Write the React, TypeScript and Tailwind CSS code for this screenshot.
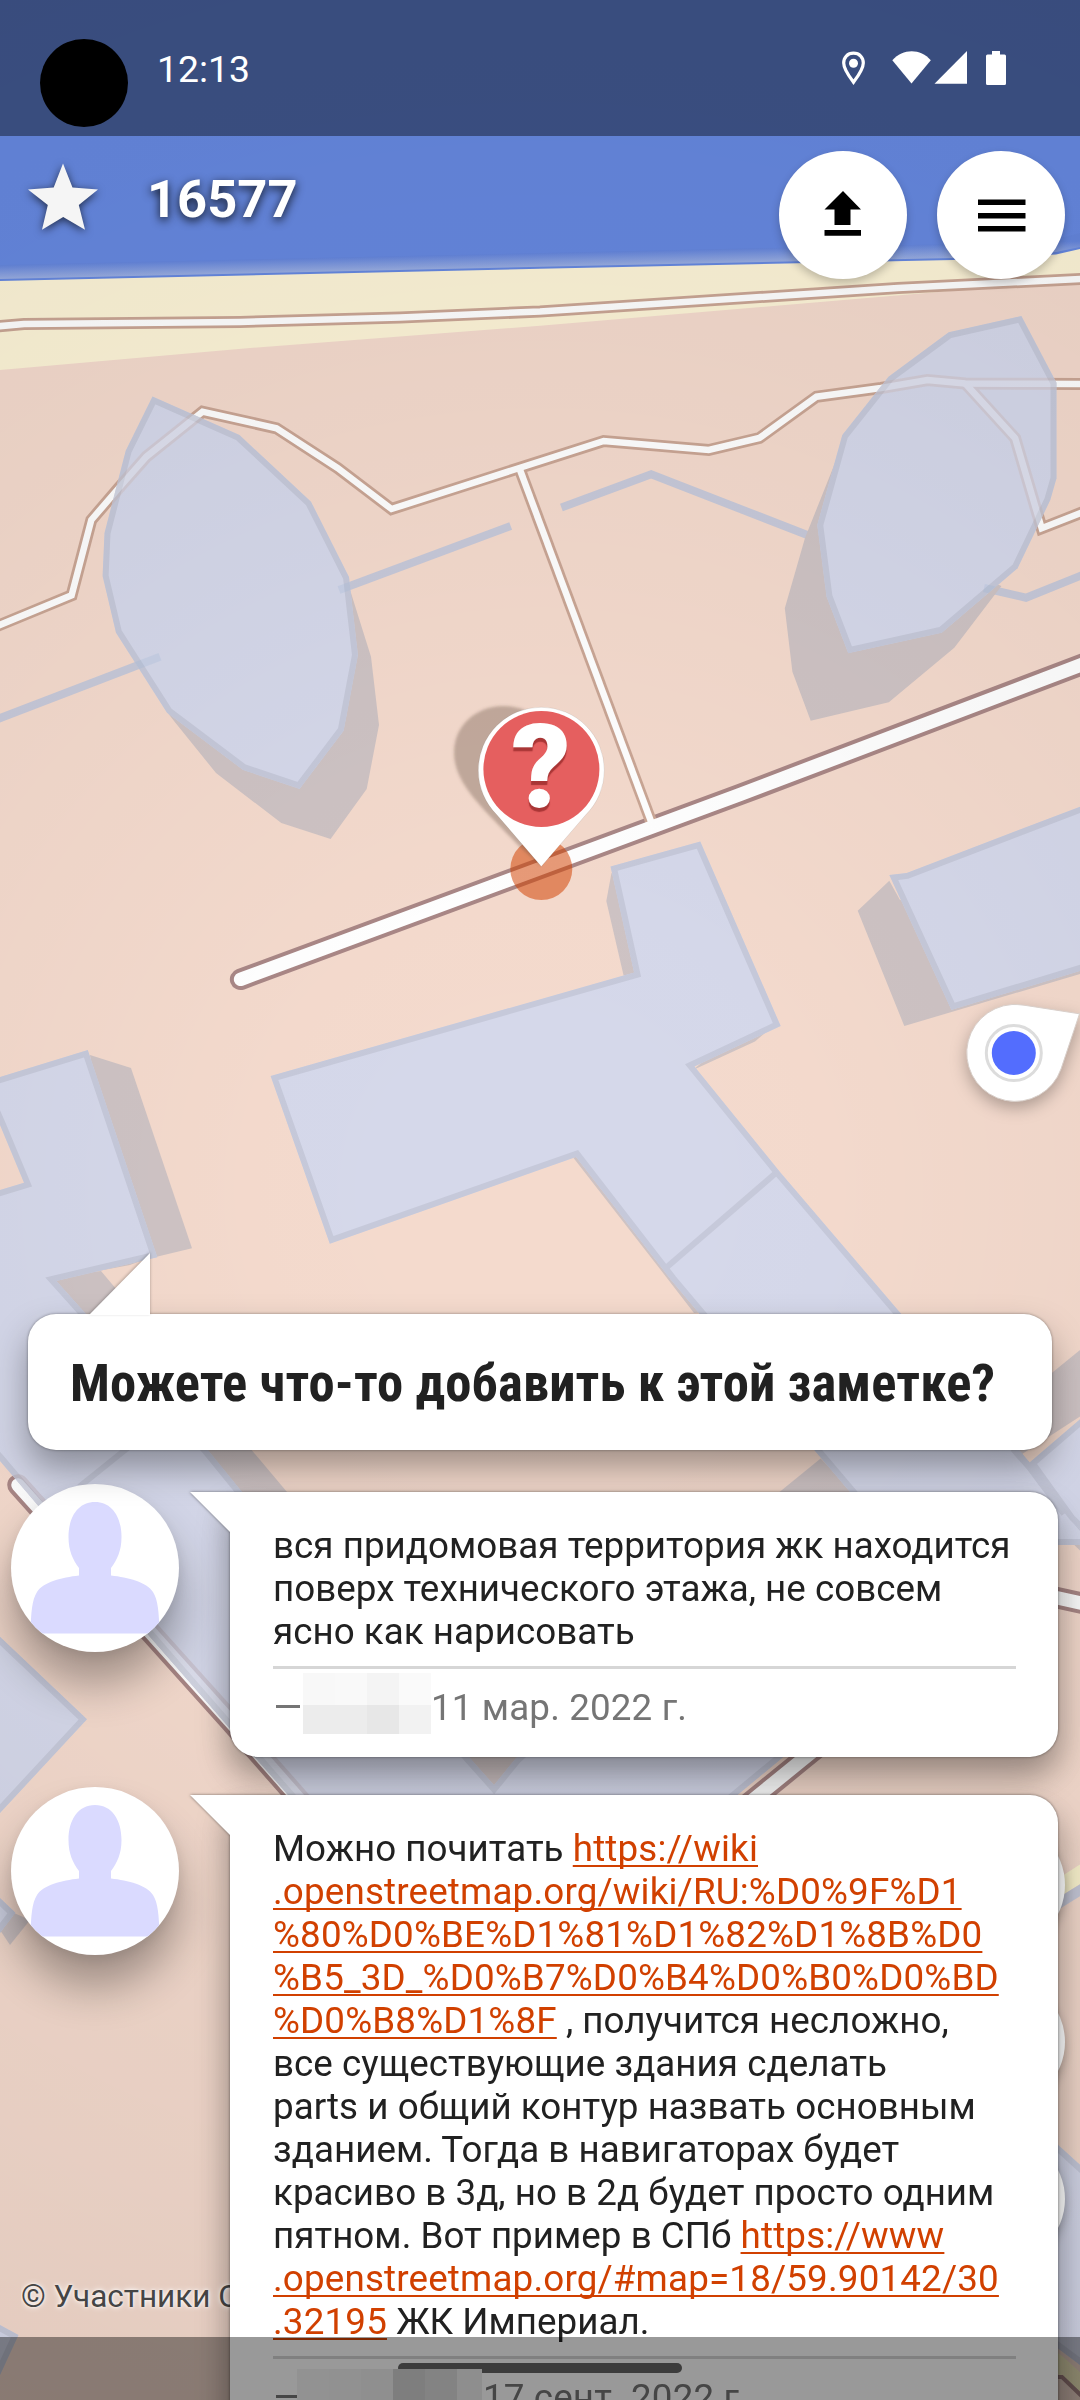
import React from 'react';

type Pt = string;

const FOOTPATHS: Pt[] = [
  '-10,629 71.6,595.3 91.3,520 118.8,488 146.4,456.7 202.5,411.7 276.5,428.3 337.5,468 391.5,509 519.3,468 603.7,441 708.7,450 759.4,438 816.5,396.7 881,388 927.4,380 965.3,383.5 1090,384',
  '965.3,383.5 1015.2,438.3 1041.7,528.3 1090,509.3',
  '519.3,468 652,824',
  '-10,327 24,324 240,322 400,317.5 540,311.5 898,288 1090,278.5',
];

const ROADS: Pt[] = [
  '240.6,979.3 740,794.5 1090,661.5',
  '18,1485 230,1721 340,1846',
  '860,1713 802,1760 700,1843',
  '1040,1594 1090,1605',
];

const CHANNELS: Pt[] = [
  '-10,722 160,656.7',
  '339,590 510.7,526',
  '561.4,507.5 651.2,474.3 815,538',
  '984,588 1026,597.7 1090,572',
];

const WALLS: Pt[] = [
  '340,570 351,593 371,656.7 379,725 366.7,789 330.6,839 281.3,823 216,773 175.6,723 167,712 240,700',
  '835.5,461.7 805,538 784.8,608.3 792.4,671.7 810.7,720.7 888.8,702.3 954.3,647.7 1001.4,586 940,560 860,480',
  '611.5,873 606.3,901 623.6,975.4 640,974 660,900',
  '889.3,880.7 857.7,910.7 904.3,1026 1090,971 1090,940 900,900',
  '90,1055 131,1068 192,1248.3 151.5,1258 110,1200',
  '47,1277 101,1271 287,1492 330,1545 280,1545 237,1492',
  '45,1281 130,1265 151,1257 60,1270',
  '693,1070 755,1041.4 765,1033 740,1030',
  '572,1156 660,1269 694,1313 710,1312 600,1160',
  '455,1740 530,1740 494,1792',
  '1090,1342 1053,1372 960,1450 1013,1460 1090,1410',
  '760,1508 820.6,1458.6 870,1508',
  '1050,1520 1062,1526 1066,1537 1090,1560 1090,1540 1064,1500',
  '0,1930 14,1913 30,1920 10,1945',
];

const BUILDINGS: Pt[] = [
  '152.5,396.5 239.5,435 311,501.7 349,577 358,655 343.7,730.7 299.6,789 243,770 167,712.7 116,632.7 102.6,576 104.5,533 125.7,450.7',
  '1021.4,316 1056.5,382.7 1056.5,478.3 1050.3,500 1017.6,568.3 941.9,632.7 848.2,653.3 826.5,596.7 817.2,525 842.3,435 888.5,376.7 948.7,332.3',
  '610.5,866.4 700.3,841.5 780.7,1026 694.5,1066.5 780,1172 900,1312.5 1020,1451 1070,1510 1100,1545 895,1545 815,1451 671,1280 576,1157 329.8,1243.7 270.6,1076 634,972.5',
  '889.3,875 906.7,872.9 1100,799 1100,965 951.4,1010',
  '-20,1083 87.8,1050 157.4,1257.3 56.5,1281 208,1450 240.5,1490 470,1758 494,1785 516,1758 800,1500 1000,1560 781,1759 700,1826 560,1900 380,1900 288,1795 232,1731 150,1637 0,1461 -20,1437 -20,1196 24,1182.7 0,1125 -20,1080',
  '1100,1402 1029,1463 1070,1520 1100,1548',
  '-20,1616 0,1636.7 87,1719.3 0,1813 -20,1833',
  '-20,1882 0,1898 15.5,1912.7 0,1933 -20,1950',
  '-20,2317 0,2325 18.5,2335 0,2375 -20,2410',
  '1040,2130 1056,2143 1100,2183 1100,2380 1040,2335',
];

function RoadLayer() {
  return (
    <g fill="none" strokeLinejoin="round" strokeLinecap="round">
      {ROADS.map((p) => (
        <polyline key={p} points={p} stroke="#a98786" strokeWidth="21.5" />
      ))}
      {FOOTPATHS.map((p) => (
        <polyline key={p} points={p} stroke="#caa695" strokeWidth="12" strokeLinejoin="miter" strokeLinecap="butt" />
      ))}
      {FOOTPATHS.map((p) => (
        <polyline key={p} points={p} stroke="#fff" strokeWidth="6.5" strokeLinejoin="miter" strokeLinecap="butt" />
      ))}
      {ROADS.map((p) => (
        <polyline key={p} points={p} stroke="#fff" strokeWidth="13.5" />
      ))}
    </g>
  );
}

function ChannelLayer() {
  return (
    <g fill="none" stroke="#c7c9d9" strokeWidth="8">
      {CHANNELS.map((p) => (
        <polyline key={p} points={p} />
      ))}
    </g>
  );
}

function CityMap() {
  return (
    <svg className="absolute inset-0" width="1080" height="2400" viewBox="0 0 1080 2400">
      <defs>
        <radialGradient id="vignette" gradientUnits="userSpaceOnUse" cx="540" cy="1190" r="1300">
          <stop offset="0" stopColor="#000" stopOpacity="0" />
          <stop offset="0.2" stopColor="#000" stopOpacity="0.003" />
          <stop offset="0.68" stopColor="#000" stopOpacity="0.046" />
          <stop offset="1" stopColor="#000" stopOpacity="0.066" />
        </radialGradient>
        <linearGradient id="shore" gradientUnits="userSpaceOnUse" x1="0" y1="265" x2="0.31" y2="279">
          <stop offset="0" stopColor="#6485dc" />
          <stop offset="1" stopColor="#9aaee2" />
        </linearGradient>
        {BUILDINGS.map((p, i) => (
          <clipPath key={p} id={'roof' + i}>
            <polygon points={p} />
          </clipPath>
        ))}
        <clipPath id="roofs">
          {[0, 1, 4].map((i) => (
            <polygon key={i} points={BUILDINGS[i]} />
          ))}
        </clipPath>
        <filter id="soft" x="-20%" y="-20%" width="140%" height="140%">
          <feGaussianBlur stdDeviation="1.6" />
        </filter>
      </defs>

      <rect width="1080" height="2400" fill="#f4dacd" />
      <polygon points="0,200 1080,200 1080,280 867,298 540,325.7 250,348 0,370" fill="#fdf4d7" />
      <polygon points="0,0 1080,0 1080,249 1056,254.5 953,260 540,268.7 0,281" fill="#6688e0" />
      <polygon points="0,265 540,253 953,244 1056,239 1080,233 1080,247 1056,252 953,258 540,266.7 0,279" fill="url(#shore)" />

      <polygon points="1090,1858 1090,1878 1040,1909 1040,1890" fill="#fdf6d0" />
      <polygon points="1090,1878 1090,1890 1040,1921 1040,1909" fill="#c7c9d9" />
      <polyline points="1040,2350 1058,2363 1090,2392" stroke="#f5edc0" strokeWidth="16" fill="none" />
      <polyline points="1050,2377 1062,2377 1090,2404" stroke="#a78584" strokeWidth="4" fill="none" />

      <ChannelLayer />
      <RoadLayer />

      <g fill="#cec3c4">
        {WALLS.map((p) => (
          <polygon key={p} points={p} />
        ))}
      </g>
      <g>
        {BUILDINGS.map((p, i) => (
          <polygon key={p} points={p} fill="#d5d8ea" stroke="#c6c9da" strokeWidth="12" clipPath={'url(#roof' + i + ')'} />
        ))}
      </g>
      <g stroke="#c6c9da" strokeWidth="6" fill="none">
        <polyline points="667,1267 777,1172" />
        <polyline points="130,1446 79,1487" />
        <polyline points="1013,1449 1029,1467 1064,1514" />
      </g>
      <g clipPath="url(#roofs)" opacity="0.22">
        <RoadLayer />
        <g fill="none" stroke="#9db8dc" strokeWidth="8">
          {CHANNELS.map((p) => (
            <polyline key={p} points={p} />
          ))}
        </g>
      </g>

      <rect width="1080" height="2400" fill="url(#vignette)" />

      <circle cx="541.3" cy="869" r="31" fill="#d14000" fillOpacity="0.53" />
      <path
        d="M541 866 L519 846 L485 811 C464 788 454 772 454 752 C454 726 476 706 503 706 C520 706 534 712 541 724 Z"
        fill="#5d4a3c"
        fillOpacity="0.34"
        filter="url(#soft)"
      />
      <path
        d="M541.3 866.5 L497 815 A63 63 0 1 1 585.6 815 Z"
        fill="#fff"
        stroke="#000"
        strokeOpacity="0.08"
        strokeWidth="1"
      />
      <circle cx="541.4" cy="769" r="58" fill="#e55f5f" />
    </svg>
  );
}

function StatusIcons() {
  return (
    <svg className="ml-auto mr-[74px] mt-[51px] h-[35px] w-[166px]" viewBox="0 0 166 35" fill="#fff">
      <path
        d="M13.5 2.2 C7.4 2.2 3.7 6.5 3.7 12 C3.7 18.5 10 26.5 13.5 31.2 C17 26.5 23.3 18.5 23.3 12 C23.3 6.5 19.6 2.2 13.5 2.2 Z"
        fill="none"
        stroke="#fff"
        strokeWidth="3.2"
      />
      <circle cx="13.5" cy="12.3" r="4.5" />
      <path d="M52.3 9.3 C63 -2.8 80.5 -2.8 90.8 9.3 L71.5 32.5 Z" />
      <path d="M94.5 32.7 L127 0 V32.7 Z" />
      <path d="M152 0 H160 V3.5 H164.5 Q166 3.5 166 5 V32.5 Q166 34 164.5 34 H147.5 Q146 34 146 32.5 V5 Q146 3.5 147.5 3.5 H152 Z" />
    </svg>
  );
}

function Link({ children }: { children: React.ReactNode }) {
  return (
    <span className="tracking-[0.17px] text-[#d14000] underline decoration-2 underline-offset-[4px] [text-decoration-skip-ink:none]">
      {children}
    </span>
  );
}

function Avatar() {
  return (
    <div className="ml-[11px] -mt-[8px] h-[168px] w-[168px] shrink-0 rounded-full bg-white shadow-[0_32px_44px_rgba(0,0,0,0.32),0_4px_12px_rgba(0,0,0,0.08)]">
      <svg width="168" height="168" viewBox="0 0 168 168">
        <clipPath id="avatarClip">
          <circle cx="84" cy="84" r="84" />
        </clipPath>
        <path
          clipPath="url(#avatarClip)"
          fill="#dadaff"
          d="M84 18 C101 18 110.5 33 110.5 53 C110.5 67 106 76 100 84 V91.5 C117 93.5 136 98 142 108 C147 116 148 128 148.5 149.5 H19.5 C20 128 21 116 26 108 C32 98 51 93.5 68 91.5 V84 C62 76 57.5 67 57.5 53 C57.5 33 67 18 84 18 Z"
        />
      </svg>
    </div>
  );
}

interface CommentProps {
  lines: React.ReactNode[];
  date: string;
  mosaic: React.ReactNode;
  className: string;
}

function Comment({ lines, date, mosaic, className }: CommentProps) {
  return (
    <div className={'flex items-start ' + className}>
      <Avatar />
      <div className="ml-[11px] flex drop-shadow-[0_0_1.5px_rgba(0,0,0,0.5)]">
        <svg className="relative z-10 -mr-px h-[41px] w-[41px]" viewBox="0 0 41 41">
          <path d="M0 0 H41 V41 L40 40 Z" fill="#fff" />
        </svg>
        <div className="w-[828px] rounded-[28px] rounded-tl-none bg-white pl-[43px] pr-[42px] pt-[32px] shadow-[0_18px_34px_rgba(0,0,0,0.28)]">
          <div className="text-[36.75px] leading-[43px] tracking-[0.03px] text-[#212121]">
            {lines.map((line, i) => (
              <div key={i} className="whitespace-nowrap">
                {line}
              </div>
            ))}
          </div>
          <div className="mt-[13px] h-[3px] bg-[#d6d6d6]" />
          <div className="flex h-[88px] pt-[4px] text-[36.75px] tracking-[0.14px] text-[#757575]">
            <span className="w-[30px] overflow-hidden pt-[13px] leading-[43px]">
              <span className="mt-[19px] ml-[3px] block h-[3px] w-[24px] bg-[#757575]" />
            </span>
            {mosaic}
            <span className="whitespace-nowrap pt-[13px] leading-[43px]">{date}</span>
          </div>
        </div>
      </div>
    </div>
  );
}

const FIRST_LINES: React.ReactNode[] = [
  'вся придомовая территория жк находится',
  'поверх технического этажа, не совсем',
  'ясно как нарисовать',
];

const SECOND_LINES: React.ReactNode[] = [
  <>Можно почитать <Link>https://wiki</Link></>,
  <Link>.openstreetmap.org/wiki/RU:%D0%9F%D1</Link>,
  <Link>%80%D0%BE%D1%81%D1%82%D1%8B%D0</Link>,
  <Link>%B5_3D_%D0%B7%D0%B4%D0%B0%D0%BD</Link>,
  <><Link>%D0%B8%D1%8F</Link> , получится несложно,</>,
  'все существующие здания сделать',
  'parts и общий контур назвать основным',
  'зданием. Тогда в навигаторах будет',
  'красиво в 3д, но в 2д будет просто одним',
  <>пятном. Вот пример в СПб <Link>https://www</Link></>,
  <Link>.openstreetmap.org/#map=18/59.90142/30</Link>,
  <><Link>.32195</Link> ЖК Империал.</>,
];

export default function App() {
  return (
    <div className="relative h-[2400px] w-[1080px] overflow-hidden bg-[#f4dacd] font-['Roboto',sans-serif]">
      <CityMap />

      <span className="absolute left-[481px] top-[687px] w-[120px] text-center font-['Roboto',sans-serif] text-[116px] font-black leading-[160px] text-white [text-shadow:0_4px_1px_rgba(120,20,20,0.55)]">
        ?
      </span>

      <svg
        className="absolute left-[956px] top-[994px] drop-shadow-[0_6px_8px_rgba(0,0,0,0.28)]"
        width="124"
        height="130"
        viewBox="956 994 124 130"
      >
        <path
          d="M1012 1004.5 Q1017 1004.3 1024 1005.2 L1079.5 1013.8 L1061 1069 A48.5 48.5 0 1 1 1012 1004.5 Z"
          fill="#fff"
          stroke="#d8cfca"
          strokeWidth="1"
        />
        <circle cx="1013.8" cy="1053" r="27.5" fill="#fff" stroke="#dcdcdc" strokeWidth="3" />
        <circle cx="1013.8" cy="1053" r="22" fill="#536dfe" />
      </svg>

      <div className="absolute left-[937px] top-[1821px] flex flex-col gap-[29px]">
        {[0, 1, 2].map((i) => (
          <div key={i} className="h-[128px] w-[128px] rounded-full bg-white shadow-[0_5px_10px_rgba(0,0,0,0.25)]" />
        ))}
      </div>
      <div className="absolute left-[21px] top-[2278px] w-[210px] overflow-hidden whitespace-nowrap text-[31.5px] leading-[38px] text-[#454545] [text-shadow:0_0_6px_#fff,0_0_3px_#fff]">
        © Участники OpenStreetMap
      </div>

      <div className="relative flex flex-col">
        <div className="flex h-[136px] items-start bg-black/40">
          <div className="ml-[40px] mt-[39px] h-[88px] w-[88px] rounded-full bg-black" />
          <div className="ml-[29px] mt-[47px] text-[37.3px] leading-[44px] text-white">12:13</div>
          <StatusIcons />
        </div>

        <div className="flex h-[1178px] items-start">
          <svg
            className="ml-[20px] mt-[19px] drop-shadow-[0_2px_4px_rgba(0,0,0,0.65)]"
            width="86"
            height="86"
            viewBox="20 155 86 86"
          >
            <path
              d="M63 163.5 L72.5 187.5 L98 189.5 L78.8 205 L85 229.7 L63.2 217 L42 229.7 L47.8 205 L28 189.5 L53.7 187.5 Z"
              fill="#f5f5f5"
            />
          </svg>
          <div className="ml-[41px] mt-[32px] text-[52.5px] font-bold leading-[62px] text-white [text-shadow:0_3px_10px_rgba(0,0,0,0.85)]">
            16577
          </div>
          <div className="ml-auto mr-[15px] mt-[15px] flex gap-[30px]">
            <div className="h-[128px] w-[128px] rounded-full bg-white shadow-[0_4px_9px_rgba(0,0,0,0.22)]">
              <svg width="128" height="128" viewBox="0 0 128 128">
                <path d="M64 40 L82 58.5 H71.5 V74 H55.5 V58.5 H45.5 Z M45.5 79 H82 V84.7 H45.5 Z" />
              </svg>
            </div>
            <div className="h-[128px] w-[128px] rounded-full bg-white shadow-[0_4px_9px_rgba(0,0,0,0.22)]">
              <svg width="128" height="128" viewBox="0 0 128 128">
                <path d="M41 48.5 H88.5 V54 H41 Z M41 62 H88.5 V67.5 H41 Z M41 75 H88.5 V80.5 H41 Z" />
              </svg>
            </div>
          </div>
        </div>

        <div className="relative ml-[28px] h-[136px] w-[1024px] rounded-[28px] bg-white pl-[42px] pt-[38px] shadow-[0_18px_34px_rgba(0,0,0,0.34),0_0_3px_rgba(0,0,0,0.4)]">
          <svg
            className="absolute left-[61px] top-[-61px] drop-shadow-[0_-1px_1.5px_rgba(0,0,0,0.3)]"
            width="62"
            height="62"
            viewBox="0 0 62 62"
          >
            <path d="M61 0 V62 H0 Z" fill="#fff" />
          </svg>
          <div className="whitespace-nowrap text-[52.6px] font-bold leading-[63px] tracking-[0.09px] text-[#212121] [font-stretch:75%]">
            Можете что-то добавить к этой заметке?
          </div>
        </div>

        <Comment
          className="mt-[42px]"
          lines={FIRST_LINES}
          date="11 мар. 2022 г."
          mosaic={
            <span className="grid h-[61px] w-[128px] grid-cols-4 grid-rows-[32px_29px]">
              <span className="bg-[#f8f8f8]" />
              <span className="bg-[#f9f9f9]" />
              <span className="bg-[#f4f4f4]" />
              <span className="bg-[#fafafa]" />
              <span className="bg-[#ececec]" />
              <span className="bg-[#ececec]" />
              <span className="bg-[#e7e7e7]" />
              <span className="bg-[#f2f2f2]" />
            </span>
          }
        />
        <Comment
          className="mt-[38px]"
          lines={SECOND_LINES}
          date="17 сент. 2022 г."
          mosaic={<span className="w-[180px]" />}
        />
      </div>

      <div className="absolute inset-x-0 bottom-0 h-[63px] bg-black/40">
        <div className="ml-[398px] mt-[26px] h-[10px] w-[284px] rounded-full bg-[#3c3c3c]" />
        <div className="absolute left-[297px] top-[32px] flex h-[31px] w-[185px]">
          <span className="w-[32px] bg-[#929292]" />
          <span className="w-[32px] bg-[#919191]" />
          <span className="w-[32px] bg-[#8f8f8f]" />
          <span className="w-[32px] bg-[#7e7e7e]" />
          <span className="w-[32px] bg-[#838383]" />
          <span className="w-[25px] bg-[#8e8e8e]" />
        </div>
      </div>
    </div>
  );
}
